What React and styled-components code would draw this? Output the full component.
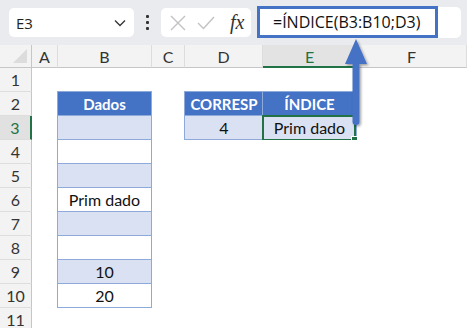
import React from "react";
import styled, { createGlobalStyle } from "styled-components";

const Global = createGlobalStyle`
  html, body { margin: 0; padding: 0; background: #ffffff; }
  body { width: 467px; height: 328px; overflow: hidden; }
`;

const Page = styled.div`
  position: relative;
  width: 467px;
  height: 328px;
  overflow: hidden;
  font-family: "Open Sans", "Noto Sans", sans-serif;
`;

const Toolbar = styled.div`
  height: 45px;
  background: #e9ebee;
  display: flex;
  align-items: center;
  padding: 0 6px 0 9px;
  box-sizing: border-box;
`;

const NameBox = styled.div`
  width: 125px;
  height: 29px;
  background: #fff;
  border-radius: 5px;
  display: flex;
  align-items: center;
  justify-content: space-between;
  padding: 0 8px 0 7px;
  box-sizing: border-box;
  font-size: 15px;
  color: #222;
`;

const Dots = styled.div`
  width: 27px;
  display: flex;
  flex-direction: column;
  align-items: center;
  gap: 3px;
  span {
    width: 3px;
    height: 3px;
    background: #333;
    border-radius: 1px;
  }
`;

const FxBox = styled.div`
  width: 90px;
  height: 29px;
  background: #fff;
  border-radius: 5px;
  display: flex;
  align-items: center;
  padding: 0 6px 0 9px;
  box-sizing: border-box;
  gap: 11px;
`;

const Fx = styled.span`
  font-family: "Liberation Serif", "DejaVu Serif", serif;
  font-style: italic;
  font-size: 20px;
  color: #333;
  margin-left: 4px;
`;

const FormulaWrap = styled.div`
  flex: 1;
  height: 31px;
  margin-left: 6px;
  background: #fff;
  border-radius: 0 5px 5px 0;
  display: flex;
`;

const FormulaInput = styled.div`
  width: 181px;
  height: 32px;
  margin-top: -1px;
  border: 3px solid #4472c4;
  box-sizing: border-box;
  display: flex;
  align-items: center;
  padding-left: 13px;
  font-size: 16px;
  color: #111;
`;

const Sheet = styled.div`
  display: grid;
  grid-template-columns: 32px 26px 94px 33px 78px 94px 1fr;
  grid-template-rows: 23px repeat(11, 24px);
  font-family: "Lato", "Open Sans", sans-serif;
`;

const Corner = styled.div`
  background: #f3f3f3;
  border-right: 1px solid #c6c6c6;
  border-bottom: 1px solid #c6c6c6;
  box-sizing: border-box;
  position: relative;
  &::after {
    content: "";
    position: absolute;
    right: 4px;
    bottom: 4px;
    border-left: 14px solid transparent;
    border-bottom: 14px solid #dcdcdc;
  }
`;

const ColHead = styled.div`
  background: ${(p) => (p.$active ? "#e3e3e3" : "#f3f3f3")};
  border-right: 1px solid #dddddd;
  border-bottom: ${(p) => (p.$active ? "2px solid #217346" : "1px solid #c6c6c6")};
  box-sizing: border-box;
  display: flex;
  align-items: center;
  justify-content: center;
  font-size: 16px;
  color: ${(p) => (p.$active ? "#217346" : "#333")};
  padding-top: ${(p) => (p.$active ? "1px" : "0")};
`;

const RowHead = styled.div`
  background: ${(p) => (p.$active ? "#e1e1e1" : "#f3f3f3")};
  border-right: ${(p) => (p.$active ? "2px solid #217346" : "1px solid #c6c6c6")};
  border-bottom: 1px solid #dddddd;
  box-sizing: border-box;
  display: flex;
  align-items: center;
  justify-content: center;
  font-size: 16px;
  color: ${(p) => (p.$active ? "#217346" : "#333")};
`;

const Cell = styled.div`
  position: relative;
  box-sizing: border-box;
  background: ${(p) => p.$fill || "#fff"};
  display: flex;
  align-items: center;
  justify-content: center;
  font-size: ${(p) => (p.$bold ? "15px" : "16px")};
  font-weight: ${(p) => (p.$bold ? 700 : 400)};
  color: ${(p) => (p.$bold ? "#fff" : "#111")};
  border-left: ${(p) => (p.$bl ? "1px solid #8eaadb" : "none")};
  border-right: ${(p) => (p.$br ? "1px solid #8eaadb" : "none")};
  border-top: ${(p) => (p.$bt ? "1px solid #8eaadb" : "none")};
  border-bottom: ${(p) => (p.$bb ? "1px solid #8eaadb" : "none")};
  margin-top: ${(p) => (p.$bt ? "-1px" : "0")};
  margin-left: ${(p) => (p.$bl ? "-1px" : "0")};
`;

const Selection = styled.div`
  position: absolute;
  inset: -1px 0 -2px -1px;
  border: 2px solid #217346;
  pointer-events: none;
  &::after {
    content: "";
    position: absolute;
    right: -4px;
    bottom: -4px;
    width: 5px;
    height: 5px;
    background: #217346;
    border: 1px solid #fff;
  }
`;

const Arrow = styled.svg`
  position: absolute;
  left: 340px;
  top: 34px;
  overflow: visible;
`;

const HEAD = "#4472c4";
const BAND = "#d9e1f2";

const cols = ["A", "B", "C", "D", "E", "F"];

const colB = {
  2: { text: "Dados", head: true },
  3: { fill: BAND },
  4: {},
  5: { fill: BAND },
  6: { text: "Prim dado" },
  7: { fill: BAND },
  8: {},
  9: { fill: BAND, text: "10" },
  10: { text: "20" },
};

function renderCell(row, col) {
  const key = `${row}-${col}`;
  if (col === "B" && colB[row]) {
    const c = colB[row];
    return (
      <Cell
        key={key}
        $fill={c.head ? HEAD : c.fill}
        $bold={c.head}
        $bl
        $br
        $bb
        $bt={row === 2}
      >
        {c.text}
      </Cell>
    );
  }
  if (col === "D" && (row === 2 || row === 3)) {
    return (
      <Cell key={key} $fill={row === 2 ? HEAD : BAND} $bold={row === 2} $bl $bt={row === 2} $bb>
        {row === 2 ? "CORRESP" : "4"}
      </Cell>
    );
  }
  if (col === "E" && (row === 2 || row === 3)) {
    return (
      <Cell key={key} $fill={row === 2 ? HEAD : BAND} $bold={row === 2} $bl $br $bt={row === 2} $bb>
        {row === 2 ? "ÍNDICE" : "Prim dado"}
        {row === 3 && <Selection />}
      </Cell>
    );
  }
  return <Cell key={key} />;
}

export default function App() {
  const rows = Array.from({ length: 11 }, (_, i) => i + 1);
  return (
    <Page>
      <Global />
      <Toolbar>
        <NameBox>
          <span>E3</span>
          <svg width="12" height="8" viewBox="0 0 12 8">
            <path d="M1 1.5 L6 6.5 L11 1.5" fill="none" stroke="#333" strokeWidth="1.3" />
          </svg>
        </NameBox>
        <Dots>
          <span />
          <span />
          <span />
        </Dots>
        <FxBox>
          <svg width="16" height="16" viewBox="0 0 16 16">
            <path d="M1 1 L15 15 M15 1 L1 15" stroke="#c2c2c2" strokeWidth="1.4" fill="none" />
          </svg>
          <svg width="18" height="14" viewBox="0 0 18 14">
            <path d="M1 7 L6.5 12.5 L17 1" stroke="#c2c2c2" strokeWidth="1.4" fill="none" />
          </svg>
          <Fx>fx</Fx>
        </FxBox>
        <FormulaWrap>
          <FormulaInput>=ÍNDICE(B3:B10;D3)</FormulaInput>
        </FormulaWrap>
      </Toolbar>
      <Sheet>
        <Corner />
        {cols.map((c) => (
          <ColHead key={c} $active={c === "E"}>
            {c}
          </ColHead>
        ))}
        {rows.map((r) => (
          <React.Fragment key={r}>
            <RowHead $active={r === 3}>{r}</RowHead>
            {cols.map((c) => renderCell(r, c))}
          </React.Fragment>
        ))}
      </Sheet>
      <Arrow width="40" height="100" viewBox="0 0 40 100">
        <defs>
          <filter id="sh" x="-50%" y="-20%" width="200%" height="140%">
            <feDropShadow dx="1.5" dy="1.5" stdDeviation="1.2" floodColor="#000" floodOpacity="0.35" />
          </filter>
        </defs>
        <g filter="url(#sh)">
          <path d="M16 5 L27 30 L19.5 30 L19.5 88 Q19.5 91 16 91 Q12.5 91 12.5 88 L12.5 30 L5 30 Z" fill={HEAD} />
        </g>
      </Arrow>
    </Page>
  );
}
